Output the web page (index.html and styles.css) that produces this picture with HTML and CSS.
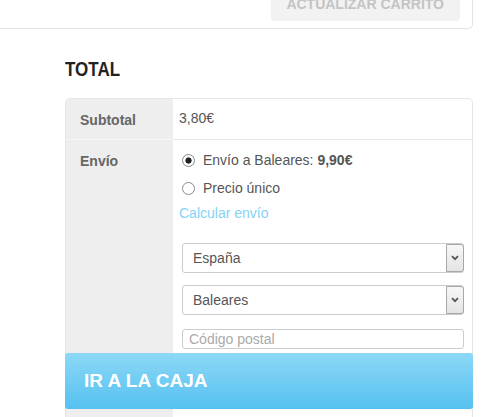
FILE: index.html
```html
<!DOCTYPE html>
<html lang="es">
<head>
    <meta charset="UTF-8">
    <meta name="viewport" content="width=device-width, initial-scale=1.0">
    <title>Carrito</title>
    <link rel="stylesheet" href="styles.css">
</head>
<body>
    <div class="cart-actions">
        <button type="button" class="btn-update">Actualizar carrito</button>
    </div>

    <div class="cart-totals">
        <h2><span>Total</span></h2>

        <table class="totals">
            <tr>
                <th>Subtotal</th>
                <td>3,80€</td>
            </tr>
            <tr class="shipping">
                <th>Envío</th>
                <td>
                    <ul class="methods">
                        <li><label><input type="radio" name="ship" checked>Envío a Baleares: <strong>9,90€</strong></label></li>
                        <li><label><input type="radio" name="ship">Precio único</label></li>
                    </ul>
                    <a href="#" class="calc-link">Calcular envío</a>

                    <!-- formulario de cálculo -->
                    <form class="calc-form">
                        <div class="select-wrap">
                            <select><option>España</option></select>
                            <span class="select-arrow">
                                <svg width="8" height="6" viewBox="0 0 8 6"><path d="M1 1.2 L4 4.2 L7 1.2" fill="none" stroke="#555" stroke-width="1.8"/></svg>
                            </span>
                        </div>
                        <div class="select-wrap">
                            <select><option>Baleares</option></select>
                            <span class="select-arrow">
                                <svg width="8" height="6" viewBox="0 0 8 6"><path d="M1 1.2 L4 4.2 L7 1.2" fill="none" stroke="#555" stroke-width="1.8"/></svg>
                            </span>
                        </div>
                        <input type="text" class="postcode" placeholder="Código postal">
                    </form>
                </td>
            </tr>
        </table>
    </div>

    <div class="checkout">
        <a href="#" class="btn-checkout">Ir a la caja</a>
    </div>
</body>
</html>
```

FILE: styles.css
```css
* {
    box-sizing: border-box;
}

body {
    margin: 0;
    font-family: "Liberation Sans", Arial, sans-serif;
    font-size: 14px;
    line-height: 20px;
    color: #555;
    background: #fff;
}

.cart-actions {
    width: 473px;
    height: 29px;
    display: flex;
    justify-content: flex-end;
    align-items: flex-end;
    padding: 0 12px 7px 0;
    border-right: 1px solid #e3e3e3;
    border-bottom: 1px solid #e3e3e3;
    border-bottom-right-radius: 5px;
}

.btn-update {
    padding: 0 16px 8px 15px;
    border: none;
    border-radius: 0 0 4px 4px;
    background: #f2f2f2;
    color: #c4c4c4;
    font-family: inherit;
    font-size: 14px;
    font-weight: 700;
    line-height: 17px;
    text-transform: uppercase;
}

.cart-totals {
    padding-left: 65px;
}

.cart-totals h2 {
    margin: 28px 0 17px;
    font-size: 20px;
    line-height: 24px;
    font-weight: 700;
    color: #222;
    text-transform: uppercase;
}

.cart-totals h2 span {
    display: inline-block;
    transform: scaleX(0.85);
    transform-origin: left center;
}

.totals {
    width: 408px;
    border-collapse: separate;
    border-spacing: 0;
    border: 1px solid #e5e5e5;
    border-bottom: none;
    border-radius: 5px 5px 0 0;
    overflow: hidden;
}

.totals th {
    width: 107px;
    padding: 11px 14px 9px;
    background: #eee;
    color: #666;
    font-weight: 700;
    text-align: left;
    vertical-align: top;
}

.totals td {
    padding: 9px 8px 11px 6px;
    vertical-align: top;
}

.totals tr + tr th {
    border-top: 1px solid #f6f6f6;
}

.totals tr + tr td {
    border-top: 1px solid #e8e8e8;
    padding-top: 10px;
}

.methods {
    list-style: none;
    margin: 0;
    padding: 0;
}

.methods li {
    margin-bottom: 8px;
}

.methods li:last-child {
    margin-bottom: 5px;
}

.methods strong {
    color: #555;
}

.methods input {
    appearance: none;
    -webkit-appearance: none;
    width: 13px;
    height: 13px;
    margin: -2px 8px 0 3px;
    vertical-align: middle;
    border: 1px solid #8a8a8a;
    border-radius: 50%;
    background: #fff;
}

.methods input:checked {
    background: radial-gradient(circle, #222 0 2.8px, #fff 3.4px);
}

.calc-link {
    color: #84d3f5;
    text-decoration: none;
}

.calc-form {
    margin-top: 20px;
    padding: 0 0 80px 3px;
}

.select-wrap {
    position: relative;
    margin-bottom: 12px;
}

.select-wrap select {
    appearance: none;
    -webkit-appearance: none;
    width: 100%;
    height: 30px;
    padding: 0 24px 0 10px;
    border: 1px solid #ccc;
    border-radius: 3px;
    background: #fff;
    color: #555;
    font-family: inherit;
    font-size: 14px;
}

.select-arrow {
    position: absolute;
    top: 1px;
    right: 0;
    bottom: 1px;
    width: 18px;
    display: flex;
    align-items: center;
    justify-content: center;
    border: 1px solid #a8a8a8;
    border-radius: 0 3px 3px 0;
    background: linear-gradient(#f7f7f7, #e4e4e4);
    pointer-events: none;
}

.postcode {
    display: block;
    width: 100%;
    height: 20px;
    margin-top: 14px;
    padding: 0 6px;
    border: 1px solid #ccc;
    border-radius: 3px;
    font-family: inherit;
    font-size: 14px;
    color: #555;
}

.postcode::placeholder {
    color: #aaa;
}

/* barra fija de pago */
.checkout {
    position: fixed;
    left: 65px;
    bottom: 8px;
    width: 408px;
}

.btn-checkout {
    display: block;
    height: 56px;
    padding: 0 19px;
    border-radius: 3px;
    background: linear-gradient(#8dd8f6, #55c1f0);
    color: #fff;
    font-size: 19px;
    font-weight: 700;
    line-height: 56px;
    text-decoration: none;
    text-transform: uppercase;
}
```
